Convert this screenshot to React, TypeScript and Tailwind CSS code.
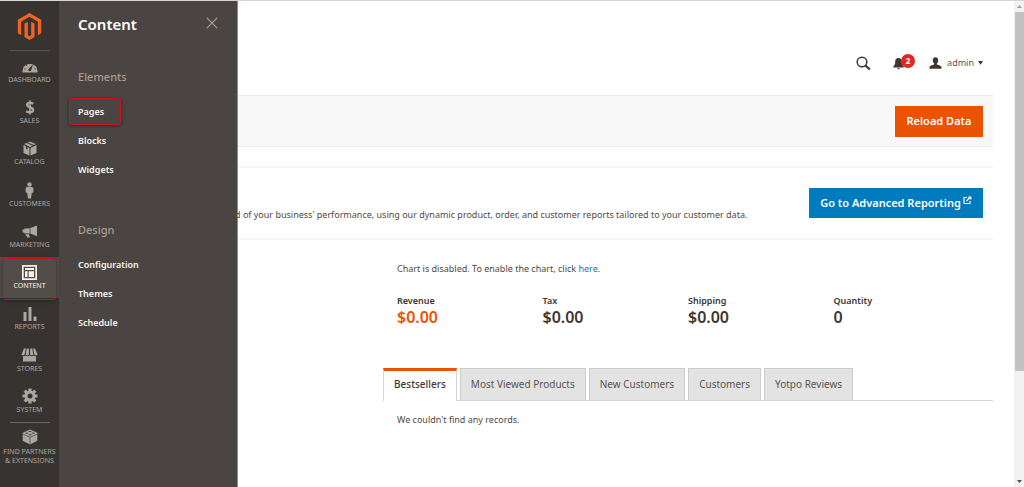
import type { ReactNode } from 'react';

type NavItem = { label: string; icon: ReactNode; active?: boolean };

const navItems: NavItem[] = [
  {
    label: 'Dashboard',
    icon: (
      <svg width="16" height="12" viewBox="0 0 16 12" fill="currentColor">
        <path d="M.6 11.4A7.500 7.500 0 1 1 15.400 11.400z" />
        <path fill="#373330" d="M11 3.200L9.300 8.900a1.500 1.500 0 1 1-2.300-1.500zM2.300 7.600h1.300v1H2.300zM3.800 4.100l.8-.7.8.9-.8.7zM7.400 2h1.100v1.300H7.400zM12.400 7.600h1.300v1h-1.300z" />
      </svg>
    ),
  },
  {
    label: 'Sales',
    icon: (
      <svg width="10" height="15" viewBox="0 0 10 15" fill="none" stroke="currentColor">
        <path strokeWidth="2.300" d="M8.400 3.800C6.300 2.600 2.100 2.400 2.100 4.800c0 3 6 2.100 6 5.200 0 2.800-4.200 2.700-6.900 1.200" />
        <path strokeWidth="1.600" d="M5 .4v14.200" />
      </svg>
    ),
  },
  {
    label: 'Catalog',
    icon: (
      <svg width="14" height="15" viewBox="0 0 14 15" fill="currentColor">
        <path d="M4.700 1.500L7 .5l6 2.600-2.100 1zM3.700 2l6.100 2.700L7 6 1 3.100zM.5 4l2.500 1.200v2.600l1.500.8V6l2 .9v7.600L.5 11.900zM7.500 6.900L13.500 4v7.900l-6 2.600z" />
      </svg>
    ),
  },
  {
    label: 'Customers',
    icon: (
      <svg width="9" height="17" viewBox="0 0 9 17" fill="currentColor">
        <circle cx="4.500" cy="2.500" r="2.200" />
        <path d="M2.300 5h4.400c1.100 0 1.700.9 1.700 2v3.100c0 1-1.200 1-1.400.2L6.600 12l-.5 4.500H2.900L2.400 12 2 10.300c-.2.800-1.400.8-1.400-.2V7c0-1.100.6-2 1.700-2z" />
      </svg>
    ),
  },
  {
    label: 'Marketing',
    icon: (
      <svg width="16" height="13" viewBox="0 0 16 13" fill="currentColor">
        <path d="M15 .5v10.700L8.300 8.500V3.100zM7.700 3.300v5.100H2.400L2.200 7.400H.6V4.600h1.600l.2-1.200zM3.300 9.200h3.400l1.400 3-2.800.4z" />
      </svg>
    ),
  },
  {
    label: 'Content',
    active: true,
    icon: (
      <svg width="15" height="15" viewBox="0 0 15 15" fill="currentColor">
        <path fillRule="evenodd" d="M0 0h15v15H0zM1.700 1.700v11.600h11.600V1.700z" />
        <path d="M3 3h9v2H3zM3 6.200h2.500V12H3zM6.700 6.200H12V12H6.700z" />
      </svg>
    ),
  },
  {
    label: 'Reports',
    icon: (
      <svg width="14" height="14" viewBox="0 0 14 14" fill="currentColor">
        <path d="M.5 5h3v9h-3zM5.500 0h3v14h-3zM10.500 9.500h3V14h-3z" />
      </svg>
    ),
  },
  {
    label: 'Stores',
    icon: (
      <svg width="17" height="14" viewBox="0 0 17 14" fill="currentColor">
        <path d="M3 .5h1.900L3.700 6.200c-.2 1.500-3 1.500-3.200 0zM5.700.5h2.200v5.700c0 1.500-3.200 1.500-3.200 0zM9.100.5h2.200l1 5.700c0 1.500-3.200 1.500-3.200 0zM12.100.5H14l2.500 5.700c-.2 1.500-3 1.500-3.200 0z" />
        <path d="M2 8.300c1 0 1.700-.3 2.200-.9 1 1.100 3.300 1.100 4.300 0 1 1.100 3.300 1.100 4.300 0 .5.600 1.200.9 2.200.9v5.200H2z" />
      </svg>
    ),
  },
  {
    label: 'System',
    icon: (
      <svg width="16" height="16" viewBox="0 0 16 16">
        <g stroke="currentColor" strokeWidth="3.200">
          <path d="M8 .5v15M.5 8h15M2.700 2.700l10.600 10.600M13.300 2.700L2.700 13.300" />
        </g>
        <circle cx="8" cy="8" r="5.500" fill="currentColor" />
        <circle cx="8" cy="8" r="2.500" fill="#373330" />
      </svg>
    ),
  },
];

const menuGroups = [
  { title: 'Elements', links: ['Pages', 'Blocks', 'Widgets'] },
  { title: 'Design', links: ['Configuration', 'Themes', 'Schedule'] },
];

const totals = [
  { label: 'Revenue', value: '$0.00', color: 'text-[#eb5202]' },
  { label: 'Tax', value: '$0.00', color: 'text-[#41362f]' },
  { label: 'Shipping', value: '$0.00', color: 'text-[#41362f]' },
  { label: 'Quantity', value: '0', color: 'text-[#41362f]' },
];

const tabs = ['Bestsellers', 'Most Viewed Products', 'New Customers', 'Customers', 'Yotpo Reviews'];

function SideNav() {
  return (
    <nav className="flex w-[59px] shrink-0 flex-col items-center bg-[#373330] text-[#aaa6a0]">
      <a href="#" aria-label="Magento" className="flex h-[49px] items-center pt-px text-[#f26322]">
        <svg width="27" height="27" viewBox="0 0 24 24" fill="currentColor">
          <path d="M12 24l-4.455-2.572v-12l2.970-1.715v12.001l1.485.902 1.485-.902V7.713l2.971 1.715v12L12 24zM22.391 6v12l-2.969 1.714V7.713L12 3.430 4.574 7.713v12.001L1.609 18V6L12 0l10.391 6z" />
        </svg>
      </a>
      <div className="h-px w-10 bg-[#5a534e]" />
      <div className="grid h-[371px] w-full grid-rows-9">
        {navItems.map((item) => (
          <a
            key={item.label}
            href="#"
            className={
              item.active
                ? 'relative z-10 flex flex-col items-center bg-[#524d49] text-[#f7f3eb]'
                : 'flex flex-col items-center'
            }
          >
            <span className="flex h-[24px] items-end justify-center pt-1">
              <span className="flex h-[17px] items-center">{item.icon}</span>
            </span>
            <span className="text-[7px] leading-[10px] uppercase">{item.label}</span>
            {item.active && (
              <span className="absolute inset-x-[3px] top-px -bottom-[2px] rounded-[3px] border border-[#d01012] shadow-[0_1px_4px_rgba(0,0,0,0.35)]" />
            )}
          </a>
        ))}
      </div>
      <div className="h-px w-10 bg-[#736358]" />
      <a href="#" className="flex flex-col items-center pt-[6px] text-center">
        <svg width="16" height="16" viewBox="0 0 16 16">
          <path fill="currentColor" d="M8 .6l7.300 3.200v8L8 15.600.7 11.800v-8z" />
          <path fill="none" stroke="#373330" strokeWidth=".6" d="M.7 5L8 8.300 15.300 5M8 8.300v7.300" />
          <g fill="#373330">
            <ellipse cx="8" cy="2.500" rx="1.700" ry=".5" />
            <ellipse cx="4.700" cy="4.100" rx="1.700" ry=".5" />
            <ellipse cx="11.300" cy="4.100" rx="1.700" ry=".5" />
            <ellipse cx="8" cy="5.700" rx="1.700" ry=".5" />
          </g>
        </svg>
        <span className="pt-[2px] text-[7px] leading-[9px] uppercase">
          Find Partners
          <br />
          &amp; Extensions
        </span>
      </a>
    </nav>
  );
}

function SubMenu() {
  return (
    <aside className="w-[179px] shrink-0 border-r border-[#8f8b88] bg-[#4a4542] px-[19px]">
      <div className="flex h-[45px] items-center justify-between">
        <h2 className="text-[15px] leading-5 font-semibold text-white">Content</h2>
        <button type="button" aria-label="Close" className="pb-[2px] text-[#a79d95]">
          <svg width="12" height="12" viewBox="0 0 12 12" stroke="currentColor" strokeWidth="1.200">
            <path d="M.7.7l10.600 10.600M11.300.7L.7 11.300" />
          </svg>
        </button>
      </div>
      {menuGroups.map((group) => (
        <section key={group.title} className="mb-[15px] pt-[21px]">
          <h3 className="mb-[10px] text-[11px] leading-5 font-medium text-[#a79d95]">{group.title}</h3>
          <ul>
            {group.links.map((link) => (
              <li key={link} className="flex h-[29px] items-center">
                <a
                  href="#"
                  className={
                    link === 'Pages'
                      ? '-ml-[9px] flex h-[27px] w-[52px] items-center rounded-[3px] border border-[#d01012] pl-2 text-[9px] font-semibold text-[#f7f3eb] shadow-[0_1px_4px_rgba(0,0,0,0.35)]'
                      : 'text-[9px] font-semibold text-[#f7f3eb]'
                  }
                >
                  {link}
                </a>
              </li>
            ))}
          </ul>
        </section>
      ))}
    </aside>
  );
}

function TopBar() {
  return (
    <header className="flex h-[94px] items-end justify-end pr-[10px] pb-[22px] text-[#41362f]">
      <button type="button" aria-label="Search" className="mr-[22px] flex h-5 items-center">
        <svg width="15" height="15" viewBox="0 0 15 15" fill="none" stroke="currentColor">
          <circle cx="6" cy="6" r="4.800" strokeWidth="1.500" />
          <path strokeWidth="2.200" d="M9.500 9.500l4.300 4" />
        </svg>
      </button>
      <button type="button" aria-label="Notifications" className="relative mr-[14px] flex h-5 w-[22px] items-center">
        <svg width="11" height="13" viewBox="0 0 11 13" fill="currentColor">
          <path d="M5.500 1c2.300 0 3.300 1.600 3.300 3.600 0 2.600.5 3.600 1.900 4.800v1H.3v-1c1.400-1.200 1.900-2.200 1.900-4.800C2.200 2.600 3.200 1 5.500 1zM4.200 11.200h2.600c-.2 1.600-2.400 1.600-2.600 0z" />
        </svg>
        <span className="absolute top-px right-0 flex h-[14px] w-[14px] items-center justify-center rounded-full bg-[#e22626] text-[8px] leading-none font-bold text-white">
          2
        </span>
      </button>
      <button type="button" className="flex h-5 items-center text-[9px]">
        <svg width="13" height="12" viewBox="0 0 13 12" fill="currentColor">
          <path d="M6.500.2c2 0 2.900 1.300 2.700 3.200-.1 1.300-.6 2.300-1.300 2.900v1.100c1.900.7 4.700 1.200 4.700 3.200v1.200H.4v-1.200c0-2 2.800-2.500 4.700-3.200V6.300c-.7-.6-1.200-1.600-1.300-2.900C3.600 1.500 4.500.2 6.500.2z" />
        </svg>
        <span className="ml-[5px] text-[#5c544e]">admin</span>
        <svg className="ml-[4px]" width="5" height="4" viewBox="0 0 5 4" fill="currentColor">
          <path d="M0 0h5L2.500 3.700z" />
        </svg>
      </button>
    </header>
  );
}

function Main() {
  return (
    <main className="min-w-0 flex-1 bg-white pr-[21px] text-[#41362f]">
      <TopBar />
      <div className="flex h-[52px] items-center justify-end border-y border-[#ececec] bg-[#f8f8f8] pr-[10px]">
        <button type="button" className="h-[31px] w-[88px] bg-[#eb5202] text-[11px] font-semibold text-white">
          Reload Data
        </button>
      </div>

      <section className="mt-[19px] flex h-[74px] items-center justify-between border-y-2 border-[#f5f5f5] pr-[10px]">
        <p className="-ml-[3px] pt-[23px] text-[9px] leading-4 whitespace-nowrap text-[#514943]">
          d of your business' performance, using our dynamic product, order, and customer reports tailored to your
          customer data.
        </p>
        <a
          href="#"
          className="flex h-[30px] w-[174px] items-center justify-center bg-[#007bbd] text-[11px] font-semibold whitespace-nowrap text-white"
        >
          Go to Advanced Reporting
          <svg className="mb-[5px] ml-[2px]" width="9" height="9" viewBox="0 0 9 9" fill="none" stroke="currentColor" strokeWidth="1.200">
            <path d="M4 1.500H1v6h6V5M3.500 5L7.500 1M5.300 1h2.500v2.500" />
          </svg>
        </a>
      </section>

      <section className="ml-[145px]">
        <p className="px-[14px] pt-[21px] text-[9px] leading-4 text-[#514943]">
          Chart is disabled. To enable the chart, click{' '}
          <a href="#" className="text-[#007bdb]">
            here
          </a>
          .
        </p>
        <dl className="grid grid-cols-4 px-[14px] pt-[17px]">
          {totals.map((total) => (
            <div key={total.label}>
              <dt className="text-[9px] leading-[14px] font-semibold">{total.label}</dt>
              <dd className={`text-[16px] leading-[19px] font-semibold ${total.color}`}>{total.value}</dd>
            </div>
          ))}
        </dl>
        <div role="tablist" className="mt-[41px] flex gap-[3px] border-b border-[#d6d6d6]">
          {tabs.map((tab, index) => (
            <button
              key={tab}
              type="button"
              role="tab"
              aria-selected={index === 0}
              className={
                index === 0
                  ? '-mb-px h-[33px] border-x border-t-[3px] border-x-[#d6d6d6] border-t-[#eb5202] bg-white px-[10px] pb-[4px] text-[10px] font-medium whitespace-nowrap'
                  : 'h-[32px] border border-b-0 border-[#cccccc] bg-[#e3e3e3] px-[10px] text-[10px] whitespace-nowrap text-[#5c544e]'
              }
            >
              {tab}
            </button>
          ))}
        </div>
        <p className="px-[14px] pt-3 text-[9px] leading-[14px] text-[#514943]">We couldn't find any records.</p>
      </section>
    </main>
  );
}

function ScrollTrack() {
  return (
    <div aria-hidden="true" className="flex w-[10px] shrink-0 flex-col items-center bg-[#f1f1f1]">
      <svg className="my-1" width="5" height="3" viewBox="0 0 5 3" fill="#a3a3a3">
        <path d="M0 3h5L2.500 0z" />
      </svg>
      <div className="w-[9px] flex-[360] bg-[#c1c1c1]" />
      <div className="flex-[105]" />
      <svg className="my-1" width="5" height="3" viewBox="0 0 5 3" fill="#505050">
        <path d="M0 0h5L2.500 3z" />
      </svg>
    </div>
  );
}

export default function App() {
  return (
    <div className="flex min-h-screen border-t border-[#d5d5d5] font-['Noto_Sans','Open_Sans',sans-serif]">
      <SideNav />
      <SubMenu />
      <Main />
      <ScrollTrack />
    </div>
  );
}
